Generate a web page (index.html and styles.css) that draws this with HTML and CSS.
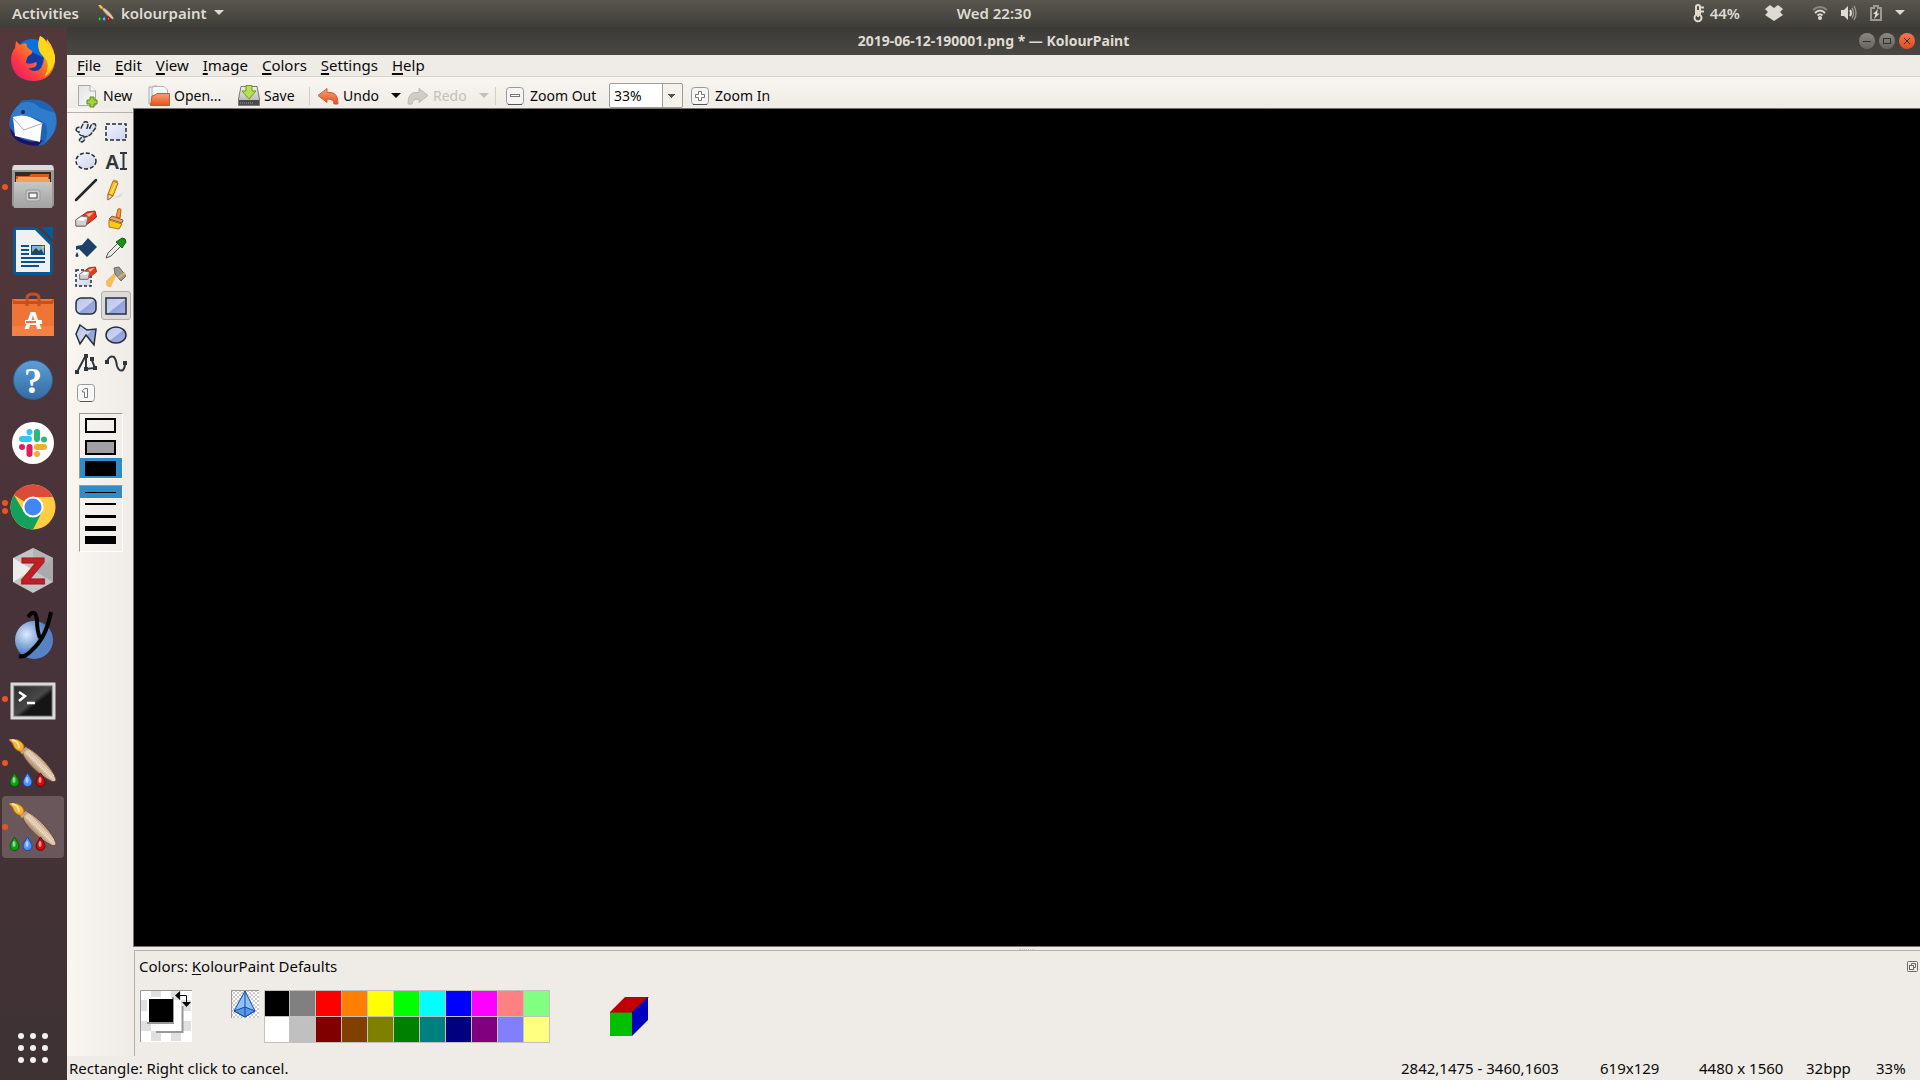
FILE: index.html
```
<!DOCTYPE html>
<html lang="en">
<head>
<meta charset="utf-8">
<title>2019-06-12-190001.png * — KolourPaint</title>
<link rel="stylesheet" href="styles.css">
</head>
<body>
<svg class="defs" aria-hidden="true">
  <defs>
    <linearGradient id="wood" x1="0" y1="1" x2="1" y2="0"><stop offset="0.3" stop-color="#8a6248"/><stop offset="0.5" stop-color="#e6d0b8"/><stop offset="0.75" stop-color="#8f6648"/></linearGradient>
    <linearGradient id="lilac" x1="0" y1="0" x2="1" y2="1"><stop offset="0" stop-color="#b9c4ec"/><stop offset="0.5" stop-color="#c9d2f2"/><stop offset="0.55" stop-color="#93a1dc"/><stop offset="1" stop-color="#a5b1e6"/></linearGradient>
    <linearGradient id="pale" x1="0" y1="0" x2="1" y2="1"><stop offset="0" stop-color="#f2f4fb"/><stop offset="1" stop-color="#cdd4ec"/></linearGradient>
    <linearGradient id="orange" x1="0" y1="0" x2="0" y2="1"><stop offset="0" stop-color="#f6a27c"/><stop offset="1" stop-color="#e2531d"/></linearGradient>
    <linearGradient id="grey" x1="0" y1="0" x2="0" y2="1"><stop offset="0" stop-color="#f1f1f1"/><stop offset="1" stop-color="#a8a8a8"/></linearGradient>
    <linearGradient id="steel" x1="0" y1="0" x2="0" y2="1"><stop offset="0" stop-color="#c6c6c6"/><stop offset="1" stop-color="#a2a2a2"/></linearGradient>
    <linearGradient id="sheet" x1="0" y1="0" x2="1" y2="1"><stop offset="0" stop-color="#e2e2e2"/><stop offset="1" stop-color="#fcfcfc"/></linearGradient>
    <symbol id="paintbrush" viewBox="0 0 48 48">
      <path d="M14 10 L19 9 C30 15 43 29 47 40 C47 43 44 43 42 42 C32 37 19 26 14 16Z" fill="url(#wood)" stroke="#6b482f"/>
      <path d="M17 14 L43 39 M20 12 L45 37" stroke="#fff1dc" stroke-width="1.5" stroke-dasharray="1 1" opacity="0.6"/>
      <path d="M0 0 C7 -1 13 2 15 7 C15 11 12 14 8 11 C4 9 5 4 0 1Z" fill="#f5b431" stroke="#a86d10"/>
      <path d="M3 1 C9 2 10 6 10 9" stroke="#ffe49a" stroke-width="2" fill="none"/>
      <path d="M12 14 L18 9" stroke="#c9a178" stroke-width="3"/>
      <path d="M5.500 34 C8 38 10 41 10 43 A4.500 4.500 0 0 1 1 43 C1 41 3 38 5.500 34Z" fill="#12a012" stroke="#075a07"/>
      <path d="M18.500 34 C21 38 23 41 23 43 A4.500 4.500 0 0 1 14 43 C14 41 16 38 18.500 34Z" fill="#5294ff" stroke="#1744a6"/>
      <path d="M31.500 34 C34 38 36 41 36 43 A4.500 4.500 0 0 1 27 43 C27 41 29 38 31.500 34Z" fill="#c80f0f" stroke="#6b0303"/>
      <g fill="#ffffff" opacity="0.55"><ellipse cx="5" cy="41" rx="1.500" ry="3"/><ellipse cx="18" cy="41" rx="1.500" ry="3"/><ellipse cx="31" cy="41" rx="1.500" ry="3"/></g>
    </symbol>
    <symbol id="eraser" viewBox="0 0 22 18">
      <path d="M1 10 L12 2 L20 1 L21.500 7 L10 16 L1 16Z" fill="#e83a18" stroke="#9b2a14"/>
      <path d="M0.500 10 L6 6 L13 7 L11 16 L1 16Z" fill="#d2d2d2" stroke="#777"/>
      <path d="M11 4 L19 2 L14 7Z" fill="#ffb7a4"/>
      <path d="M2 10 L7 7 L12 8 L8 11Z" fill="#fff"/>
    </symbol>
  </defs>
</svg>

<header class="panel">
  <div class="panel-side">
    <button class="panel-btn">Activities</button>
    <button class="panel-btn panel-app"><svg width="16" height="16"><use href="#paintbrush"/></svg>kolourpaint<i class="caret"></i></button>
  </div>
  <time class="clock">Wed 22:30</time>
  <div class="panel-side panel-status">
    <svg width="12" height="18" viewBox="0 0 12 18" fill="none" stroke="#dfdbd2" stroke-width="2"><path d="M3 11 V3 Q3 1 5 1 Q7 1 7 3 V11 A3.500 3.500 0 1 1 3 11Z"/><path d="M5 6 V13 M7 3.500 H11 M7 7.500 H11"/></svg>
    <span class="temp">44%</span>
    <svg class="dropbox" width="18" height="18" viewBox="0 0 18 18" fill="#dfdbd2"><path d="M5 1 L9 4 L13 1 L18 5 L15 8 L18 11 L15 13 L9 17 L3 13 L0 11 L3 8 L0 5Z"/></svg>
    <svg class="wifi" width="16" height="16" viewBox="0 0 16 16" fill="none" stroke="#dfdbd2" stroke-width="2"><path d="M1 5 Q8 -1 15 5" opacity="0.4"/><path d="M3 8 Q8 3 13 8 M5.500 10.500 Q8 8 10.500 10.500"/><circle cx="8" cy="13" r="2" fill="#dfdbd2" stroke="none"/></svg>
    <svg width="16" height="16" viewBox="0 0 16 16" fill="none" stroke="#dfdbd2" stroke-width="2"><path d="M0 5 H3 L7 1 V15 L3 11 H0Z" fill="#dfdbd2" stroke="none"/><path d="M9 5 Q11 8 9 11"/><path d="M11 3 Q14 8 11 13 M13 1 Q17 8 13 15" opacity="0.5" stroke-width="1.500"/></svg>
    <svg width="12" height="18" viewBox="0 0 12 18"><path d="M1 4 H4 V2 H8 V4 H11 V16 H1Z" fill="none" stroke="#9b9991" stroke-width="2"/><path d="M8 5 L3 10 H5.500 L4 15 L9.500 9.500 H7Z" fill="#dfdbd2"/></svg>
    <i class="caret"></i>
  </div>
</header>

<div class="desktop">
  <nav class="dock" aria-label="Dock">
    <button class="dock-item" aria-label="Firefox"><svg viewBox="0 0 62 62">
      <defs><linearGradient id="fx" x1="0" y1="1" x2="1" y2="0"><stop offset="0" stop-color="#d6127d"/><stop offset="0.3" stop-color="#ff3647"/><stop offset="0.65" stop-color="#ff9016"/><stop offset="1" stop-color="#ffe226"/></linearGradient></defs>
      <circle cx="30" cy="28" r="17" fill="#0b72dd"/><path d="M30 24 A10 10 0 1 0 38 42 L42 30Z" fill="#163aa4"/>
      <path d="M14 13 L18 17 Q23 14 25 16 Q23 19 30 23 Q31 26 26 28 Q24 32 24 35 Q29 37 34 34 Q36 36 33 39 Q25 42 25 38 Q28 45 37 42 Q44 36 41 26 Q34 20 38 8 Q42 10 44 15 L45 11 Q54 22 53 34 Q50 53 31 53 Q11 52 9 33 Q9 24 13 20Z" fill="url(#fx)"/>
      <path d="M38 8 Q43 10 45 15 Q54 23 53 33 Q50 44 43 48 Q49 36 42 29 Q33 22 38 8Z" fill="#ffd51d"/></svg></button>
    <button class="dock-item" aria-label="Thunderbird"><svg viewBox="0 0 62 62">
      <path d="M25 8 Q45 5 53 20 Q60 38 42 52 L48 51 L36 54 L38 49 Q10 52 7 32 Q8 20 16 16 Q18 6 25 8Z" fill="#1f64b4"/>
      <path d="M18 12 Q28 6 38 16 L53 21 Q58 38 42 52 Q48 40 43 31 Q36 26 27 25 Q17 21 14 30 Q10 31 9 24 Q12 16 18 12Z" fill="#2f7ccc"/>
      <path d="M8 36 Q16 48 30 50 L41 48 L36 54 Q10 53 8 36Z" fill="#19146b"/>
      <path d="M11 25 Q20 22 28 25 L40 31 L38 50 L13 44Z" fill="#fff"/><path d="M11 26 L22 38 L41 31" fill="none" stroke="#aaa"/><circle cx="21" cy="20" r="2" fill="#182b48"/></svg></button>
    <button class="dock-item running" aria-label="Files"><svg viewBox="0 0 62 62">
      <rect x="10" y="9" width="42" height="42" rx="3" fill="#999"/><path d="M12 9 H50 L52 14 H10Z" fill="#dcdcdc"/><rect x="13" y="16" width="36" height="12" fill="#3b2722"/><path d="M14 20 H27 L29 18 H47 V28 H14Z" fill="#db5a1a"/><path d="M14 23 H48 V28 H14Z" fill="#f6a04c"/><path d="M16 22 H46" stroke="#fff1cc"/><path d="M12 26 H50 V52 H12Z" fill="url(#steel)"/><rect x="24" y="34" width="14" height="11" rx="2" fill="#ccc" stroke="#999"/><rect x="27" y="37" width="8" height="5" fill="#f6f6f6" stroke="#444"/></svg></button>
    <button class="dock-item" aria-label="LibreOffice Writer"><svg viewBox="0 0 62 62">
      <path d="M14 7 H35 L51 23 V52 Q51 55 48 55 H14 Q11 55 11 52 V10 Q11 7 14 7Z" fill="#0b578f"/><path d="M39 7 H51 V20Z" fill="#045b9b"/><path d="M14 10 H33 L48 25 V52 H14Z" fill="#f0f0f0"/><path d="M19 26 H27 M19 30 H27 M19 34 H27 M19 38 H43 M19 42 H43 M19 46 H37" stroke="#0d5286" stroke-width="2"/><rect x="29.500" y="25.500" width="13" height="9" fill="#7cb6e2" stroke="#0d5286"/><path d="M30 34 V32 L34 28 L37 31 L39 29 L42 34Z" fill="#24455c"/><circle cx="41" cy="27" r="1.500" fill="#fbc527"/></svg></button>
    <button class="dock-item" aria-label="Ubuntu Software"><svg viewBox="0 0 62 62">
      <path d="M10 15 H52 V52 H10Z" fill="#ef7536"/><path d="M10 15 L13 17 H49 L52 15 L51 20 H11Z" fill="#cf4d17"/><path d="M10 42 H52 V52 H10Z" fill="#f58044"/><path d="M25 22 V14 Q25 10 31 10 Q37 10 37 14 V22" fill="none" stroke="#c74e1d" stroke-width="3"/><text x="31" y="45" class="store-letter">A</text><path d="M23 38 H40" stroke="#fff" stroke-width="4"/><path d="M24 38 H34" stroke="#ee7338" stroke-width="2"/></svg></button>
    <button class="dock-item" aria-label="Help"><svg viewBox="0 0 62 62">
      <defs><linearGradient id="hp" x1="0" y1="0" x2="0" y2="1"><stop offset="0" stop-color="#5e9fd4"/><stop offset="1" stop-color="#326ba3"/></linearGradient></defs>
      <circle cx="31" cy="32" r="19.500" fill="url(#hp)" stroke="#2d5f90"/><text x="31" y="45" class="help-letter">?</text></svg></button>
    <button class="dock-item" aria-label="Slack"><svg viewBox="0 0 62 62">
      <circle cx="31" cy="31" r="21" fill="#fff"/><g fill="none" stroke-width="6" stroke-linecap="round"><path d="M20 27 H27" stroke="#36c5f0"/><path d="M27.500 20 h0" stroke="#36c5f0"/><path d="M35 20 V27" stroke="#2eb67d"/><path d="M42 27.500 h0" stroke="#2eb67d"/><path d="M35 35 H42" stroke="#ecb22e"/><path d="M35 42 h0" stroke="#ecb22e"/><path d="M27.500 35 V42" stroke="#e01e5a"/><path d="M20 35 h0" stroke="#e01e5a"/></g></svg></button>
    <button class="dock-item running-two" aria-label="Google Chrome"><svg viewBox="0 0 62 62">
      <circle cx="31" cy="31" r="22.500" fill="#ffcd40"/><path d="M31 31 L12 19 A22.500 22.500 0 0 1 51 21 H31Z" fill="#dc4a3c"/><path d="M12 19 A22.500 22.500 0 0 0 31 53.500 L40 36 L31 31 L22 36Z" fill="#12a05d"/><circle cx="31" cy="31" r="10.500" fill="#fff"/><circle cx="31" cy="31" r="8.500" fill="#4285f4"/></svg></button>
    <button class="dock-item" aria-label="Zotero"><svg viewBox="0 0 62 62">
      <path d="M31 8 L51 18 V42 L31 53 L11 42 V18Z" fill="#c4c4c4"/><path d="M31 8 L51 18 L31 30Z" fill="#b4b4b4"/><path d="M11 18 L31 30 L11 42Z" fill="#ececec"/><path d="M51 18 V42 L31 30Z" fill="#aaa"/><text x="31" y="44" class="z-letter">Z</text></svg></button>
    <button class="dock-item" aria-label="yEd"><svg viewBox="0 0 62 62">
      <defs><radialGradient id="ball" cx="0.3" cy="0.35"><stop offset="0" stop-color="#dcebff"/><stop offset="1" stop-color="#5583c3"/></radialGradient></defs>
      <circle cx="32" cy="36" r="19" fill="url(#ball)"/><path d="M26 13 Q33 3 35 16 Q35 27 38 34" fill="none" stroke="#050505" stroke-width="4"/><path d="M49 8 Q44 34 30 46 Q23 54 17 52" fill="none" stroke="#050505" stroke-width="4"/></svg></button>
    <button class="dock-item running" aria-label="Terminal"><svg viewBox="0 0 62 62">
      <defs><linearGradient id="tm" x1="0" y1="0" x2="1" y2="1"><stop offset="0" stop-color="#2c2c2c"/><stop offset="0.5" stop-color="#484848"/><stop offset="0.6" stop-color="#151515"/></linearGradient></defs>
      <rect x="8.500" y="14.500" width="45" height="37" rx="1" fill="#dadada" stroke="#8b8b8b"/><rect x="12" y="18" width="38" height="30" fill="url(#tm)" stroke="#666"/><path d="M17 24 L23 28 L17 33 M25 35 H33" fill="none" stroke="#fff" stroke-width="2.500"/></svg></button>
    <button class="dock-item running" aria-label="KolourPaint"><svg class="dock-brush" viewBox="0 0 48 48"><use href="#paintbrush"/></svg></button>
    <button class="dock-item running active" aria-label="KolourPaint, current window"><svg class="dock-brush" viewBox="0 0 48 48"><use href="#paintbrush"/></svg></button>
    <button class="dock-item apps" aria-label="Show Applications"><svg viewBox="0 0 62 62" fill="#f2f1ef"><circle cx="19" cy="19" r="3"/><circle cx="31" cy="19" r="3"/><circle cx="43" cy="19" r="3"/><circle cx="19" cy="31" r="3"/><circle cx="31" cy="31" r="3"/><circle cx="43" cy="31" r="3"/><circle cx="19" cy="43" r="3"/><circle cx="31" cy="43" r="3"/><circle cx="43" cy="43" r="3"/></svg></button>
  </nav>

  <main class="window">
    <div class="titlebar">
      <h1>2019-06-12-190001.png * — KolourPaint</h1>
      <div class="controls">
        <button aria-label="Minimize"><svg viewBox="0 0 16 16"><path d="M4 8.500 H12"/></svg></button>
        <button aria-label="Maximize"><svg viewBox="0 0 16 16"><rect x="4.500" y="5.500" width="7" height="5"/></svg></button>
        <button class="close" aria-label="Close"><svg viewBox="0 0 16 16"><path d="M5 5 L11 11 M11 5 L5 11"/></svg></button>
      </div>
    </div>
    <nav class="menubar" aria-label="Menu">
      <button><u>F</u>ile</button><button><u>E</u>dit</button><button><u>V</u>iew</button><button><u>I</u>mage</button><button><u>C</u>olors</button><button><u>S</u>ettings</button><button><u>H</u>elp</button>
    </nav>
    <div class="toolbar">
      <button class="tool-new"><svg viewBox="0 0 22 22"><path d="M1.500 0.500 H13 L18.500 6 V20.500 H1.500Z" fill="url(#sheet)" stroke="#a9a9a9"/><path d="M13 0.500 V6 H18.500" fill="#fff" stroke="#a9a9a9"/><path d="M13 12 H17 V15 H20 V19 H17 V22 H13 V19 H10 V15 H13Z" fill="#a6d33c" stroke="#5b8a13"/></svg>New</button>
      <button class="tool-open"><svg viewBox="0 0 22 22"><path d="M1 19 V2 H4 L6 1 H9 V19Z" fill="#f1f1f1" stroke="#aaa"/><path d="M7 1.500 H16 L19.500 5 V12 H4 V2Z" fill="#f7f7f7" stroke="#b2b2b2"/><path d="M2.500 20.500 L4 11 L7 10 L9 8.500 H21.500 V20.500Z" fill="url(#orange)" stroke="#c85a2b"/></svg>Open...</button>
      <button class="tool-save"><svg viewBox="0 0 22 22"><path d="M3 1.500 H19 L21.500 14 V20.500 H0.500 V14Z" fill="url(#grey)" stroke="#777"/><path d="M1 15 H21 V20 H1Z" fill="#4b4b4b"/><path d="M2 18 H16" stroke="#999" stroke-dasharray="1 1"/><path d="M8 0.500 H14 V6 H18 L11 14 L4 6 H8Z" fill="#b9e052" stroke="#6b9b16"/></svg>Save</button>
      <i class="sep"></i>
      <button class="tool-undo"><svg viewBox="0 0 22 22"><path d="M1 10.500 L10 3.500 V7.500 H14 Q21 8 21 19 H17 Q17 14 10 14 V17.500Z" fill="url(#orange)" stroke="#cd6034" stroke-linejoin="round"/></svg>Undo</button>
      <button class="drop" aria-label="Undo history"><i class="caret"></i></button>
      <button class="tool-redo" disabled><svg viewBox="0 0 22 22"><path d="M21 10.500 L12 3.500 V7.500 H8 Q1 8 1 19 H5 Q5 14 12 14 V17.500Z" fill="#cfcdca" stroke="#b9b7b4" stroke-linejoin="round"/></svg>Redo</button>
      <button class="drop" aria-label="Redo history" disabled><i class="caret"></i></button>
      <i class="sep"></i>
      <button class="tool-out"><svg class="key" viewBox="0 0 18 18"><rect x="0.500" y="0.500" width="17" height="17" rx="3" fill="#f4f4f4" stroke="#999"/><path d="M2 17.500 H16" stroke="#555"/><rect x="4.500" y="7.500" width="9" height="2" fill="#fff" stroke="#777"/></svg>Zoom Out</button>
      <select class="zoom" aria-label="Zoom"><option>33%</option></select>
      <button class="tool-in"><svg class="key" viewBox="0 0 18 18"><rect x="0.500" y="0.500" width="17" height="17" rx="3" fill="#f4f4f4" stroke="#999"/><path d="M2 17.500 H16" stroke="#555"/><path d="M7.500 4.500 H10.500 V7.500 H13.500 V10.500 H10.500 V13.500 H7.500 V10.500 H4.500 V7.500 H7.500Z" fill="#fff" stroke="#777"/></svg>Zoom In</button>
    </div>

    <div class="work">
      <aside class="toolbox">
        <div class="tools">
          <button aria-label="Free-form selection"><svg viewBox="0 0 22 22"><path d="M1 9 Q2 5 6 7 L8 3 Q9 0 12 1 Q14 3 12 7 L15 7 Q16 2 20 3 Q22 6 19 9 L16 13 Q13 16 9 16 Q11 19 7 21 Q3 20 5 18 L8 15 Q3 14 4 11 Q2 11 1 9Z" fill="url(#pale)" stroke="#2c363e" stroke-width="1.500" stroke-dasharray="5 1"/></svg></button>
          <button aria-label="Rectangular selection"><svg viewBox="0 0 22 22"><rect x="1" y="3" width="20" height="16" fill="url(#pale)" stroke="#222b33" stroke-width="1.500" stroke-dasharray="4 2"/></svg></button>
          <button aria-label="Elliptical selection"><svg viewBox="0 0 22 22"><ellipse cx="11" cy="11" rx="10" ry="8" fill="url(#pale)" stroke="#222b33" stroke-width="1.500" stroke-dasharray="4 2"/></svg></button>
          <button aria-label="Text"><svg viewBox="0 0 22 22"><text x="0" y="19" class="text-tool">A</text><path d="M15 3 H22 M15 19 H22 M18.500 3 V19" stroke="#30373c" stroke-width="2"/></svg></button>
          <button aria-label="Line"><svg viewBox="0 0 22 22"><path d="M1 21 L21 1" stroke="#20272c" stroke-width="2.500" stroke-linecap="round"/></svg></button>
          <button aria-label="Pen"><svg viewBox="0 0 22 22"><path d="M7 20 L19 13 L15 18Z" fill="#ddd8d4"/><path d="M3 15 L8 2 L13 4 L8 17 L3 21Z" fill="#ffc21a" stroke="#b56d09"/><path d="M8 2 L9 0.500 L13 2 L13 4Z" fill="#e97943"/><path d="M3 15 L8 17 L3 21Z" fill="#f6dcb3" stroke="#a66a24"/><path d="M6 15 L11 4" stroke="#fff0a0"/></svg></button>
          <button aria-label="Eraser"><svg viewBox="0 0 22 22"><use href="#eraser" y="2" width="22" height="18"/></svg></button>
          <button aria-label="Brush"><svg viewBox="0 0 22 22"><path d="M11 9 L13 1 Q16 0 16 2 L15 10Z" fill="#f99a32" stroke="#b55c0b"/><path d="M4 11 L7 8 L18 12 L17 15Z" fill="#d9a876" stroke="#8c5b2c"/><path d="M4 12 L17 16 L14 21 L4 19Z" fill="#ffcb1b" stroke="#b17804"/></svg></button>
          <button aria-label="Flood fill"><svg viewBox="0 0 22 22" fill="#1d3f68"><path d="M13 1 L22 10 L12 20 L4 12 L1 13 V9 L7 8Z"/><path d="M2 15 Q5 20 2 20 Q-1 20 2 15Z"/></svg></button>
          <button aria-label="Color picker"><svg viewBox="0 0 22 22"><path d="M1 21 L3 16 L13 6 L16 9 L6 19Z" fill="#e6ece6" stroke="#4e5551"/><path d="M11 5 L17 1 Q21 1 21 5 L17 11Z" fill="#18921a" stroke="#0b5e0d"/></svg></button>
          <button aria-label="Color eraser"><svg viewBox="0 0 22 22"><rect x="1" y="4" width="15" height="16" fill="url(#pale)" stroke="#222b33" stroke-width="1.500" stroke-dasharray="3 2"/><use href="#eraser" x="4" width="18" height="15"/></svg></button>
          <button aria-label="Spraycan"><svg viewBox="0 0 22 22"><path d="M9 7 L1 15 Q0 22 6 21 L11 10Z" fill="#f9bc5c"/><path d="M9 2 L14 1 L21 10 L16 15 L10 8Z" fill="#969696" stroke="#6b6b6b"/><path d="M13 12 L20 7" stroke="#d3b950" stroke-width="2"/></svg></button>
          <button aria-label="Rounded rectangle"><svg viewBox="0 0 22 22"><rect x="1" y="3" width="20" height="16" rx="5" fill="url(#lilac)" stroke="#252f37" stroke-width="1.500"/></svg></button>
          <button aria-label="Rectangle" aria-pressed="true"><svg viewBox="0 0 22 22"><rect x="1" y="3" width="20" height="16" fill="url(#lilac)" stroke="#252f37" stroke-width="1.500"/></svg></button>
          <button aria-label="Polygon"><svg viewBox="0 0 22 22"><path d="M5 1 L12 6 L21 5 L19 21 L11 11 L5 20 L1 10Z" fill="url(#lilac)" stroke="#252f37" stroke-width="1.500"/></svg></button>
          <button aria-label="Ellipse"><svg viewBox="0 0 22 22"><ellipse cx="11" cy="11" rx="10" ry="8" fill="url(#lilac)" stroke="#252f37" stroke-width="1.500"/></svg></button>
          <button aria-label="Connected lines"><svg viewBox="0 0 22 22" fill="none" stroke="#30373c" stroke-width="2"><path d="M2 19 L11 2 V16 L20 15 L16 5"/><g fill="#30373c" stroke="none"><path d="M0 17h4v4H0zM9 1h4v4H9zM9 14h4v4H9zM18 13h4v4h-4zM15 4h4v4h-4z"/></g></svg></button>
          <button aria-label="Curve"><svg viewBox="0 0 22 22"><path d="M2 9 Q4 2 9 4 Q11 6 12 13 Q14 19 18 17 Q20 15 20 10" fill="none" stroke="#30373c" stroke-width="2"/><path d="M0 7h4v4H0zM18 8h4v4h-4z" fill="#30373c"/></svg></button>
          <button aria-label="Zoom 1:1"><svg viewBox="0 0 22 22"><rect x="2.500" y="2.500" width="17" height="17" rx="3" fill="#f7f7f7" stroke="#999"/><path d="M5 19.500 H17" stroke="#555"/><path d="M7.500 8.500 L10 6.500 H12.500 V15.500 H9.500 V10 H7.500Z" fill="#fff" stroke="#777"/></svg></button>
        </div>
        <div class="options fills">
          <button aria-label="No fill"><i class="fill-none"></i></button>
          <button aria-label="Fill with background color"><i class="fill-back"></i></button>
          <button aria-label="Fill with foreground color" aria-pressed="true"><i class="fill-fore"></i></button>
        </div>
        <div class="options lines">
          <button aria-label="1 pixel" aria-pressed="true"><i class="w1"></i></button>
          <button aria-label="2 pixels"><i class="w2"></i></button>
          <button aria-label="3 pixels"><i class="w3"></i></button>
          <button aria-label="5 pixels"><i class="w5"></i></button>
          <button aria-label="8 pixels"><i class="w8"></i></button>
        </div>
      </aside>
      <div class="stage">
        <div class="canvas"></div>
        <div class="splitter"><i></i></div>
        <section class="colors">
          <div class="colors-head">
            <h2>Colors: <u>K</u>olourPaint Defaults</h2>
            <button class="float" aria-label="Undock"><svg viewBox="0 0 11 11" fill="none" stroke="#6d6b67"><rect x="0.500" y="0.500" width="10" height="10" rx="1"/><rect x="2.500" y="4.500" width="4" height="4"/><path d="M4.500 4 V2.500 H8.500 V6.500 H7"/></svg></button>
          </div>
          <div class="colors-row">
            <svg class="pair" viewBox="0 0 52 52"><path d="M0 0h52v52H0z" fill="#fff"/><path d="M11 0h10v10H11zM31 0h10v10H31zM1 10h6v11H1zM41 10h10v11H41zM1 31h10v10H1zM41 31h10v10H41zM11 41h10v10H11zM31 41h10v10H31z" fill="#e0e0e0"/><path d="M0.500 52V0.500H52" fill="none" stroke="#9a9894"/><path d="M16 16h26v26H16z" fill="#fff"/><path d="M16 42H42.500V16" fill="none" stroke="#9a9894" stroke-width="2"/><path d="M7 7h27v27H7z" fill="#9a9894"/><path d="M7 7h25v25H7z" fill="#fff"/><path d="M9 9h24v23H9z" fill="#000"/><path d="M38 5.500 H46.500 V13" fill="none" stroke="#000"/><path d="M40 1 V10 L35 5.500ZM42 12 H51 L46.500 17Z" fill="#000"/></svg>
            <svg class="clear" viewBox="0 0 28 28"><defs><pattern id="chk" width="4" height="4" patternUnits="userSpaceOnUse"><path d="M0 0h4v4H0z" fill="#fff"/><path d="M0 0h2v2H0zM2 2h2v2H2z" fill="#ccc"/></pattern></defs><path d="M0 0h28v28H0z" fill="url(#chk)"/><path d="M0.500 28V0.500H28" fill="none" stroke="#9a9894"/><path d="M14 1 L24 21 L14 27 L3 21Z" fill="#8fc1f4" stroke="#1448ad"/><path d="M3 21 L14 17 L24 21 L14 27Z" fill="#5796e8" stroke="#1448ad"/><path d="M14 1 V27" stroke="#1448ad"/></svg>
            <div class="palette">
              <button class="c-black" aria-label="Black"></button><button class="c-grey" aria-label="Grey"></button><button class="c-red" aria-label="Red"></button><button class="c-orange" aria-label="Orange"></button><button class="c-yellow" aria-label="Yellow"></button><button class="c-green" aria-label="Green"></button><button class="c-aqua" aria-label="Aqua"></button><button class="c-blue" aria-label="Blue"></button><button class="c-purple" aria-label="Purple"></button><button class="c-pink" aria-label="Pink"></button><button class="c-lgreen" aria-label="Light green"></button>
              <button class="c-white" aria-label="White"></button><button class="c-lgrey" aria-label="Light grey"></button><button class="c-dred" aria-label="Dark red"></button><button class="c-dorange" aria-label="Dark orange"></button><button class="c-dyellow" aria-label="Dark yellow"></button><button class="c-dgreen" aria-label="Dark green"></button><button class="c-daqua" aria-label="Dark aqua"></button><button class="c-dblue" aria-label="Dark blue"></button><button class="c-dpurple" aria-label="Dark purple"></button><button class="c-lblue" aria-label="Light blue"></button><button class="c-tan" aria-label="Light yellow"></button>
            </div>
            <svg class="cube" viewBox="0 0 39 39"><path d="M0 15 L15 0 H39 L23 15Z" fill="#c00000"/><path d="M0 15 H22 V39 H0Z" fill="#00c000"/><path d="M22 15 L38 0 V23 L22 39Z" fill="#0000c0"/><path d="M0 15.500 H22" stroke="#7a4a00"/></svg>
          </div>
        </section>
      </div>
    </div>
    <footer class="status">
      <span class="hint">Rectangle: Right click to cancel.</span>
      <span class="s-pos">2842,1475 - 3460,1603</span><span class="s-size">619x129</span><span class="s-doc">4480 x 1560</span><span class="s-bpp">32bpp</span><span class="s-zoom">33%</span>
    </footer>
  </main>
</div>
</body>
</html>
```
FILE: styles.css
```
* { box-sizing: border-box; }

body {
  margin: 0;
  height: 100vh;
  display: flex;
  flex-direction: column;
  overflow: hidden;
  background: #efebe7;
  color: #0a0a0a;
  font: 14px/20px "Noto Sans", "Open Sans", sans-serif;
}

button, select {
  margin: 0;
  padding: 0;
  border: 0;
  background: none;
  color: inherit;
  font: inherit;
}

svg { display: block; flex: none; overflow: visible; }
u { text-decoration-thickness: 1px; text-underline-offset: 2px; text-decoration-skip-ink: none; }
.defs { position: absolute; width: 0; height: 0; }

.caret {
  border: 5px solid transparent;
  border-top-color: currentColor;
  border-bottom: 0;
}

/* Desktop panel */
.panel {
  flex: none;
  display: flex;
  align-items: center;
  height: 27px;
  padding: 0 15px 2px 12px;
  background: linear-gradient(#59564e, #3f3e39);
  color: #dfdbd2;
  font-size: 15px;
  font-weight: 600;
}
.panel-side { flex: 1; display: flex; align-items: center; gap: 19px; }
.panel-btn { display: flex; align-items: center; }
.panel-app { gap: 7px; }
.clock { margin-left: 71px; }
.panel-status { justify-content: flex-end; gap: 13px; }
.temp { margin-left: -8px; }
.dropbox { margin: 0 16px 0 12px; }

/* Dock */
.desktop { flex: 1; display: flex; min-height: 0; }
.dock {
  flex: none;
  width: 67px;
  padding: 1px 2px;
  display: flex;
  flex-direction: column;
  gap: 2px;
  background: linear-gradient(#53383b, #47333a 60%, #3e3233);
}
.dock-item {
  position: relative;
  flex: none;
  width: 62px;
  height: 62px;
  border-radius: 4px;
}
.dock-brush { width: 48px; height: 48px; margin: 0 7px; }
.active { background: #69575c; }
.apps { margin-top: auto; }
.running::before, .running-two::before, .running-two::after {
  content: "";
  position: absolute;
  left: 0;
  top: 28px;
  width: 6px;
  height: 6px;
  border-radius: 3px;
  background: #e95420;
}
.running-two::before { top: 24px; }
.running-two::after { top: 32px; }
.store-letter { font: 700 24px "Noto Sans", sans-serif; fill: #fff; text-anchor: middle; }
.help-letter { font: 700 36px "Liberation Serif", serif; fill: #fff; text-anchor: middle; }
.z-letter { font: 700 36px "DejaVu Sans", sans-serif; fill: #c01f25; stroke: #a3161b; text-anchor: middle; }
.text-tool { font: 700 20px "Liberation Sans", sans-serif; fill: #30373c; }

/* Window */
.window { flex: 1; min-width: 0; display: flex; flex-direction: column; }
.titlebar {
  flex: none;
  position: relative;
  height: 28px;
  display: flex;
  align-items: center;
  justify-content: center;
  background: linear-gradient(#3b3a36, #4a4843);
  color: #dfdbd2;
}
.titlebar h1 { margin: 0; font-size: 14px; font-weight: 700; }
.controls { position: absolute; right: 5px; top: 6px; display: flex; gap: 4px; }
.controls button {
  width: 16px;
  height: 16px;
  border-radius: 8px;
  background: linear-gradient(#8a8881, #66645e);
}
.controls .close { background: linear-gradient(#f4764c, #df4e1d); }
.controls path, .controls rect { fill: none; stroke: #33322e; }

.menubar {
  flex: none;
  display: flex;
  align-items: flex-start;
  gap: 14px;
  height: 22px;
  padding: 0 10px;
  border-bottom: 1px solid #d5d1cc;
  font-size: 15px;
}
.menubar u { text-decoration-thickness: 2px; }

.toolbar {
  flex: none;
  display: flex;
  align-items: center;
  height: 31px;
  padding: 6px 10px 0;
  background: linear-gradient(#f9f6f1, #efebe7);
}
.toolbar button { display: flex; align-items: center; gap: 4px; white-space: nowrap; }
.toolbar svg { width: 22px; height: 22px; }
.toolbar .key { width: 18px; height: 18px; margin-right: 2px; }
.toolbar button:disabled { color: #c3c0bd; }
.sep { width: 1px; height: 18px; background: #d3cfca; }
.tool-new { width: 71px; }
.tool-open { width: 90px; }
.tool-save { width: 71px; }
.tool-undo { width: 74px; margin-left: 7px; }
.tool-redo { width: 72px; }
.toolbar .drop { width: 16px; }
.sep + .tool-out { margin-left: 10px; }
.tool-out { width: 103px; }
.zoom {
  appearance: none;
  width: 74px;
  height: 25px;
  margin-right: 8px;
  padding: 0 4px;
  border: 1px solid #a09d99;
  border-radius: 2px;
  background:
    linear-gradient(45deg, transparent 50%, #555 50%) 59px 11px / 4px 4px no-repeat,
    linear-gradient(135deg, #555 50%, transparent 50%) 63px 11px / 4px 4px no-repeat,
    linear-gradient(90deg, transparent 53px, #a09d99 53px, #a09d99 54px, #f5f2ee 54px) #fff;
  background-origin: border-box;
}

/* Tool box */
.work { flex: 1; min-height: 0; display: flex; }
.toolbox {
  flex: none;
  width: 66px;
  padding: 9px 2px 0 4px;
  background:
    linear-gradient(#b5b2ae, #b5b2ae) 0 4px / 100% 1px no-repeat,
    linear-gradient(90deg, #f9f6f1, #efebe7);
}
.tools { display: grid; grid-template-columns: 30px 30px; grid-auto-rows: 29px; }
.tools button { display: grid; place-items: center; border: 1px solid transparent; border-radius: 3px; }
.tools svg { width: 22px; height: 22px; }
.tools [aria-pressed] { background: #dedad7; border-color: #b1aeaa; }
.options {
  width: 44px;
  margin: 6px 0 0 8px;
  display: flex;
  flex-direction: column;
  border: 1px solid;
  border-color: #9d9a96 #fff #fff #9d9a96;
}
.options button { display: flex; align-items: center; padding-left: 5px; }
.options i { width: 31px; background: #000; }
.options [aria-pressed] { background: #308cc6; }
.fills button { height: 22px; }
.fills button:last-child { height: 20px; }
.fills i { height: 15px; border: 2px solid #000; }
.fills .fill-none { background: transparent; }
.fills .fill-back { background: #a0a0a4; }
.lines { height: 67px; }
.lines button { height: 12px; }
.w1 { height: 1px; }
.w2 { height: 2px; }
.w3 { height: 3px; }
.w5 { height: 5px; }
.w8 { height: 8px; }

/* Canvas and colour panel */
.stage { flex: 1; min-width: 0; display: flex; flex-direction: column; }
.canvas {
  flex: 1;
  background: #000;
  border: solid #77746f;
  border-width: 1px 0 1px 1px;
}
.splitter { flex: none; display: flex; justify-content: center; align-items: flex-end; height: 3px; }
.splitter i { width: 16px; border-top: 1px dotted #c9c5c0; }
.colors {
  flex: none;
  margin-left: 1px;
  padding-bottom: 13px;
  border: solid #b5b2ae;
  border-width: 1px 0 0 1px;
}
.colors-head { display: flex; align-items: center; justify-content: space-between; height: 32px; padding: 0 2px 0 4px; }
.colors-head h2 { margin: 0 0 2px; font-size: 15px; font-weight: 400; }
.float { width: 11px; height: 11px; margin-bottom: 2px; }
.colors-row { display: flex; align-items: flex-start; padding: 7px 0 0 5px; }
.pair { width: 52px; height: 52px; margin-right: 39px; }
.clear { width: 28px; height: 28px; margin-right: 5px; }
.palette {
  display: grid;
  grid-template-columns: 24px repeat(10, 25px);
  grid-auto-rows: 25px;
  gap: 1px;
  padding: 1px;
  margin-right: 60px;
  background: #c3c1be;
}
.cube { width: 39px; height: 39px; margin-top: 7px; }
.c-black { background: #000; }
.c-grey { background: #808080; }
.c-red { background: #f00; }
.c-orange { background: #ff8000; }
.c-yellow { background: #ff0; }
.c-green { background: #0f0; }
.c-aqua { background: #0ff; }
.c-blue { background: #00f; }
.c-purple { background: #f0f; }
.c-pink { background: #ff8080; }
.c-lgreen { background: #80ff80; }
.c-white { background: #fff; }
.c-lgrey { background: #c0c0c0; }
.c-dred { background: #800000; }
.c-dorange { background: #804000; }
.c-dyellow { background: #808000; }
.c-dgreen { background: #008000; }
.c-daqua { background: #008080; }
.c-dblue { background: #000080; }
.c-dpurple { background: #800080; }
.c-lblue { background: #8080ff; }
.c-tan { background: #ffff80; }

.status { flex: none; display: flex; height: 24px; padding: 2px 14px 2px 2px; font-size: 15px; white-space: nowrap; }
.hint { flex: 1; }
.s-pos { width: 199px; }
.s-size { width: 99px; }
.s-doc { width: 107px; }
.s-bpp { width: 70px; }
.s-zoom { width: 30px; }
```
